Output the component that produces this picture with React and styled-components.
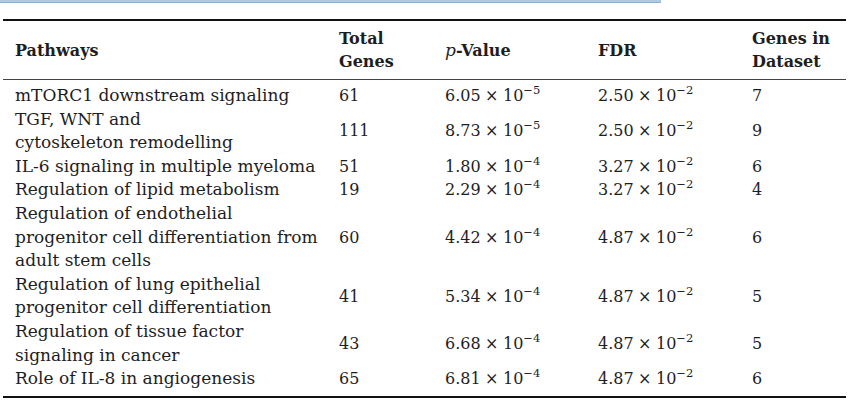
import React from "react";
import styled, { createGlobalStyle } from "styled-components";

const Global = createGlobalStyle`
  html, body { margin: 0; padding: 0; background: #fff; }
  body { font-family: "DejaVu Serif", "Liberation Serif", serif; color: #1e1e1e; }
`;

const Page = styled.div`
  width: 857px;
  height: 409px;
  background: #fff;
  overflow: hidden;
`;

const CaptionBar = styled.div`
  width: 661px;
  height: 2px;
  background: #aecbe4;
  border-bottom: 1px solid #8cb0cf;
`;

const Table = styled.table`
  margin: 16px 0 0 3px;
  width: 843px;
  border-collapse: collapse;
  table-layout: fixed;
  font-size: 17px;
  line-height: 23.6px;
  border-top: 2px solid #111;
  border-bottom: 2px solid #111;
`;

const HeadRow = styled.tr`
  border-bottom: 1px solid #444;
`;

const Th = styled.th`
  text-align: left;
  font-weight: bold;
  font-size: 16px;
  padding: 6px 0 6px 12px;
  vertical-align: middle;
  line-height: 23px;
`;

const Italic = styled.i`
  font-weight: normal;
  font-size: 17px;
`;

const Td = styled.td`
  padding: 0 0 0 12px;
  vertical-align: middle;
`;

const Body = styled.tbody`
  tr:first-child td { padding-top: 4px; }
  tr:last-child td { padding-bottom: 5px; }
`;

const Num = styled.span`
  font-size: 16px;
`;

const Sup = styled.sup`
  font-size: 0.72em;
  vertical-align: 0.65em;
  line-height: 0;
`;

const Times = styled.span`
  padding: 0 0.28em;
`;

const Sci = ({ m, e }) => (
  <Num>
    {m}
    <Times>×</Times>10<Sup>−{e}</Sup>
  </Num>
);

const rows = [
  ["mTORC1 downstream signaling", 61, "6.05", 5, "2.50", 2, 7],
  ["TGF, WNT and\ncytoskeleton remodelling", 111, "8.73", 5, "2.50", 2, 9],
  ["IL-6 signaling in multiple myeloma", 51, "1.80", 4, "3.27", 2, 6],
  ["Regulation of lipid metabolism", 19, "2.29", 4, "3.27", 2, 4],
  [
    "Regulation of endothelial\nprogenitor cell differentiation from\nadult stem cells",
    60,
    "4.42",
    4,
    "4.87",
    2,
    6,
  ],
  ["Regulation of lung epithelial\nprogenitor cell differentiation", 41, "5.34", 4, "4.87", 2, 5],
  ["Regulation of tissue factor\nsignaling in cancer", 43, "6.68", 4, "4.87", 2, 5],
  ["Role of IL-8 in angiogenesis", 65, "6.81", 4, "4.87", 2, 6],
];

const Lines = ({ text }) =>
  text.split("\n").map((l, i, arr) => (
    <React.Fragment key={i}>
      {l}
      {i < arr.length - 1 && <br />}
    </React.Fragment>
  ));

export default function App() {
  return (
    <Page>
      <Global />
      <CaptionBar />
      <Table>
        <colgroup>
          <col style={{ width: 324 }} />
          <col style={{ width: 106 }} />
          <col style={{ width: 153 }} />
          <col style={{ width: 154 }} />
          <col style={{ width: 106 }} />
        </colgroup>
        <thead>
          <HeadRow>
            <Th>Pathways</Th>
            <Th>
              Total
              <br />
              Genes
            </Th>
            <Th>
              <Italic>p</Italic>-Value
            </Th>
            <Th>FDR</Th>
            <Th>
              Genes in
              <br />
              Dataset
            </Th>
          </HeadRow>
        </thead>
        <Body>
          {rows.map((r, i) => (
            <tr key={i}>
              <Td>
                <Lines text={r[0]} />
              </Td>
              <Td>
                <Num>{r[1]}</Num>
              </Td>
              <Td>
                <Sci m={r[2]} e={r[3]} />
              </Td>
              <Td>
                <Sci m={r[4]} e={r[5]} />
              </Td>
              <Td>
                <Num>{r[6]}</Num>
              </Td>
            </tr>
          ))}
        </Body>
      </Table>
    </Page>
  );
}
